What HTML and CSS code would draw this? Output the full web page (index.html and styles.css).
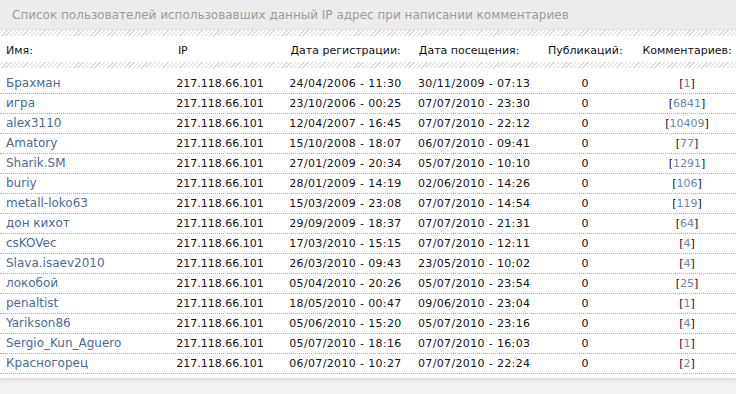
FILE: index.html
```html
<!DOCTYPE html>
<html>
<head>
<meta charset="utf-8">
<link rel="stylesheet" href="styles.css">
</head>
<body>
<div class="panel">
  <div class="title">Список пользователей использовавших данный IP адрес при написании комментариев</div>
  <div class="stripe"></div>
  <div class="head">
    <span class="c-name">Имя:</span>
    <span class="c-ip">IP</span>
    <span class="c-reg">Дата регистрации:</span>
    <span class="c-visit">Дата посещения:</span>
    <span class="c-pub">Публикаций:</span>
    <span class="c-com">Комментариев:</span>
  </div>
  <div class="stripe"></div>
  <div class="rows">
    <div class="row"><a class="c-name">Брахман</a><span class="c-ip">217.118.66.101</span><span class="c-reg">24/04/2006 - 11:30</span><span class="c-visit">30/11/2009 - 07:13</span><span class="c-pub">0</span><span class="c-com">[<a>1</a>]</span></div>
    <div class="row"><a class="c-name">игра</a><span class="c-ip">217.118.66.101</span><span class="c-reg">23/10/2006 - 00:25</span><span class="c-visit">07/07/2010 - 23:30</span><span class="c-pub">0</span><span class="c-com">[<a>6841</a>]</span></div>
    <div class="row"><a class="c-name">alex3110</a><span class="c-ip">217.118.66.101</span><span class="c-reg">12/04/2007 - 16:45</span><span class="c-visit">07/07/2010 - 22:12</span><span class="c-pub">0</span><span class="c-com">[<a>10409</a>]</span></div>
    <div class="row"><a class="c-name">Amatory</a><span class="c-ip">217.118.66.101</span><span class="c-reg">15/10/2008 - 18:07</span><span class="c-visit">06/07/2010 - 09:41</span><span class="c-pub">0</span><span class="c-com">[<a>77</a>]</span></div>
    <div class="row"><a class="c-name">Sharik.SM</a><span class="c-ip">217.118.66.101</span><span class="c-reg">27/01/2009 - 20:34</span><span class="c-visit">05/07/2010 - 10:10</span><span class="c-pub">0</span><span class="c-com">[<a>1291</a>]</span></div>
    <div class="row"><a class="c-name">buriy</a><span class="c-ip">217.118.66.101</span><span class="c-reg">28/01/2009 - 14:19</span><span class="c-visit">02/06/2010 - 14:26</span><span class="c-pub">0</span><span class="c-com">[<a>106</a>]</span></div>
    <div class="row"><a class="c-name">metall-loko63</a><span class="c-ip">217.118.66.101</span><span class="c-reg">15/03/2009 - 23:08</span><span class="c-visit">07/07/2010 - 14:54</span><span class="c-pub">0</span><span class="c-com">[<a>119</a>]</span></div>
    <div class="row"><a class="c-name">дон кихот</a><span class="c-ip">217.118.66.101</span><span class="c-reg">29/09/2009 - 18:37</span><span class="c-visit">07/07/2010 - 21:31</span><span class="c-pub">0</span><span class="c-com">[<a>64</a>]</span></div>
    <div class="row"><a class="c-name">csKOVec</a><span class="c-ip">217.118.66.101</span><span class="c-reg">17/03/2010 - 15:15</span><span class="c-visit">07/07/2010 - 12:11</span><span class="c-pub">0</span><span class="c-com">[<a>4</a>]</span></div>
    <div class="row"><a class="c-name">Slava.isaev2010</a><span class="c-ip">217.118.66.101</span><span class="c-reg">26/03/2010 - 09:43</span><span class="c-visit">23/05/2010 - 10:02</span><span class="c-pub">0</span><span class="c-com">[<a>4</a>]</span></div>
    <div class="row"><a class="c-name">локобой</a><span class="c-ip">217.118.66.101</span><span class="c-reg">05/04/2010 - 20:26</span><span class="c-visit">05/07/2010 - 23:54</span><span class="c-pub">0</span><span class="c-com">[<a>25</a>]</span></div>
    <div class="row"><a class="c-name">penaltist</a><span class="c-ip">217.118.66.101</span><span class="c-reg">18/05/2010 - 00:47</span><span class="c-visit">09/06/2010 - 23:04</span><span class="c-pub">0</span><span class="c-com">[<a>1</a>]</span></div>
    <div class="row"><a class="c-name">Yarikson86</a><span class="c-ip">217.118.66.101</span><span class="c-reg">05/06/2010 - 15:20</span><span class="c-visit">05/07/2010 - 23:16</span><span class="c-pub">0</span><span class="c-com">[<a>4</a>]</span></div>
    <div class="row"><a class="c-name">Sergio_Kun_Aguero</a><span class="c-ip">217.118.66.101</span><span class="c-reg">05/07/2010 - 18:16</span><span class="c-visit">07/07/2010 - 16:03</span><span class="c-pub">0</span><span class="c-com">[<a>1</a>]</span></div>
    <div class="row"><a class="c-name">Красногорец</a><span class="c-ip">217.118.66.101</span><span class="c-reg">06/07/2010 - 10:27</span><span class="c-visit">07/07/2010 - 22:24</span><span class="c-pub">0</span><span class="c-com">[<a>2</a>]</span></div>
  </div>
  <div class="footer"></div>
</div>
</body>
</html>
```

FILE: styles.css
```css
html, body {
  margin: 0;
  padding: 0;
  background: #fff;
}
body {
  font-family: Tahoma, "DejaVu Sans", Verdana, sans-serif;
  font-size: 11px;
  color: #111;
}
.panel {
  width: 736px;
}
.title {
  height: 29px;
  line-height: 31px;
  padding-left: 12px;
  background: #ececec;
  color: #9a9a9a;
  font-size: 12px;
  border-bottom: 1px solid #e2e2e2;
}
.stripe {
  height: 6px;
  background: repeating-linear-gradient(-45deg, #d8d8d8 0 1px, #fff 1px 3px);
}
.head {
  display: flex;
  height: 22px;
  padding-top: 4px;
  line-height: 22px;
  color: #111;
}
.head + .stripe {
  height: 6px;
}
.rows {
  padding-top: 6px;
}
.row {
  display: flex;
  height: 19px;
  line-height: 19px;
  border-bottom: 1px dotted #aaa;
}
.c-name { width: 178px; padding-left: 6px; box-sizing: border-box; }
.row .c-name { color: #4d6a92; font-size: 12px; }
.c-ip { width: 114px; }
.head .c-ip { padding-left: 2px; }
.c-reg { width: 130px; }
.c-visit { width: 122px; }
.row .c-reg, .row .c-visit { letter-spacing: 0.35px; }
.c-pub { width: 93px; text-align: center; }
.c-com { width: 99px; padding-left: 7px; text-align: center; }
.c-com a { color: #6d86a6; }
.footer {
  margin-top: 4px;
  height: 20px;
  border-top: 1px solid #dcdcdc;
  background: #f2f2f2;
  box-shadow: inset 0 2px 2px #e4e4e4;
}
```
